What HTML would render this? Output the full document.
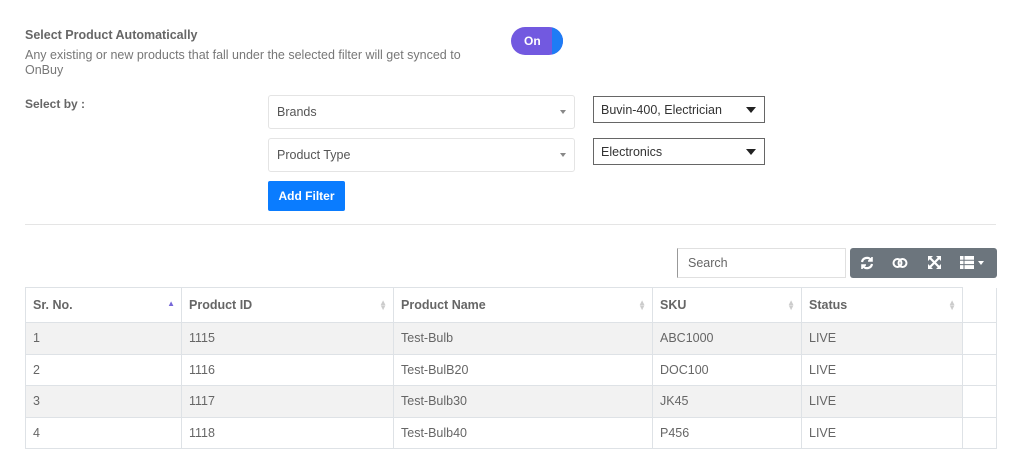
<!DOCTYPE html>
<html><head><style>
*{box-sizing:border-box;margin:0;padding:0}
body{width:1024px;height:447px;background:#fff;font-family:"Liberation Sans",sans-serif;color:#6c757d;position:relative;overflow:hidden;font-size:12px}
.a{position:absolute}
.sel{position:absolute;border:1px solid #e4e4e4;border-radius:3px;background:#fff;padding-left:8px;display:flex;align-items:center;font-size:12.5px;color:#555}
.sel .c{position:absolute;right:8px;top:50%;margin-top:-2px;border-left:3px solid transparent;border-right:3px solid transparent;border-top:4px solid #888}
.bs{position:absolute;border:1px solid #666;background:#fff;padding-left:7px;display:flex;align-items:center;font-size:12.5px;color:#333}
.bs .c{position:absolute;right:8px;top:50%;margin-top:-3px;border-left:5px solid transparent;border-right:5px solid transparent;border-top:6px solid #222}
table{position:absolute;left:25px;top:287px;border-collapse:collapse;font-size:12.5px}
td,th{border:1px solid #dee2e6;text-align:left;padding:0 7px;position:relative}
th{height:35px;font-weight:bold;color:#666}
td{height:31.5px;color:#666}
tr.g td{background:#f2f2f2}
.s{position:absolute;right:6px;top:12px;color:#ccc;font-size:8px;line-height:5px}
</style></head><body>
<div class="a" style="left:25px;top:28px;font-weight:bold;font-size:12.5px;color:#666">Select Product Automatically</div>
<div class="a" style="left:25px;top:48px;font-size:12.5px;line-height:15px;color:#777;width:455px">Any existing or new products that fall under the selected filter will get synced to OnBuy</div>
<div class="a" style="left:511px;top:27px;width:52px;height:28px;border-radius:14px;background:#7259e0;overflow:hidden"><div class="a" style="right:0;top:0;width:11px;height:28px;background:#1e7cf5"></div><div class="a" style="left:13px;top:7px;color:#fff;font-weight:bold;font-size:12px">On</div></div>
<div class="a" style="left:25px;top:97px;font-weight:bold;color:#666">Select by :</div>
<div class="sel" style="left:268px;top:95px;width:307px;height:34px">Brands<span class="c"></span></div>
<div class="sel" style="left:268px;top:138px;width:307px;height:34px">Product Type<span class="c"></span></div>
<div class="bs" style="left:593px;top:96px;width:172px;height:27px">Buvin-400, Electrician<span class="c"></span></div>
<div class="bs" style="left:593px;top:138px;width:172px;height:27px">Electronics<span class="c"></span></div>
<div class="a" style="left:268px;top:181px;width:77px;height:30px;background:#0a7cff;border-radius:2px;color:#fff;font-weight:bold;font-size:12px;text-align:center;line-height:30px">Add Filter</div>
<div class="a" style="left:25px;top:224px;width:971px;height:1px;background:#e5e5e5"></div>
<div class="a" style="left:677px;top:248px;width:169px;height:30px;border:1px solid #e0e0e0;border-left:1px solid #999;padding-left:10px;line-height:28px;font-size:12.5px;color:#666">Search</div>
<div class="a" style="left:850px;top:248px;width:147px;height:30px;background:#6c757d;border-radius:3px;color:#fff">
<svg class="a" style="left:10px;top:8px" width="14" height="14" viewBox="0 0 14 14" fill="none" stroke="#fff" stroke-width="2.2"><path d="M2 6a5 5 0 0 1 9-2M12 8a5 5 0 0 1-9 2"/><path d="M12 1v4H8M2 13V9h4" stroke-width="1.6" fill="#fff"/></svg>
<svg class="a" style="left:42px;top:9px" width="16" height="12" viewBox="0 0 16 12" fill="none" stroke="#fff" stroke-width="2"><circle cx="5.5" cy="6" r="4"/><circle cx="10.5" cy="6" r="4"/></svg>
<svg class="a" style="left:78px;top:8px" width="13" height="13" viewBox="0 0 13 13" fill="#fff"><path d="M0 0h5L0 5zM13 0v5L8 0zM0 13V8l5 5zM13 13H8l5-5z"/><path d="M2 2l9 9M11 2l-9 9" stroke="#fff" stroke-width="2.2"/></svg>
<svg class="a" style="left:110px;top:8px" width="14" height="13" viewBox="0 0 14 13" fill="#fff"><rect x="0" y="0" width="14" height="13"/><path d="M4 0v13M0 4.3h14M0 8.6h14" stroke="#6c757d" stroke-width="1"/></svg>
<div class="a" style="left:128px;top:13px;border-left:3px solid transparent;border-right:3px solid transparent;border-top:4px solid #fff"></div>
</div>
<table>
<tr><th style="width:156px">Sr. No.<span class="s" style="color:#7667d8;top:13px">▲</span></th><th style="width:212px">Product ID<span class="s">▲<br>▼</span></th><th style="width:259px">Product Name<span class="s">▲<br>▼</span></th><th style="width:149px">SKU<span class="s">▲<br>▼</span></th><th style="width:161px">Status<span class="s">▲<br>▼</span></th><th style="width:34px;border-left:none;border-top:none"></th></tr>
<tr class="g"><td>1</td><td>1115</td><td>Test-Bulb</td><td>ABC1000</td><td>LIVE</td><td style="background:#fff"></td></tr>
<tr><td>2</td><td>1116</td><td>Test-BulB20</td><td>DOC100</td><td>LIVE</td><td></td></tr>
<tr class="g"><td>3</td><td>1117</td><td>Test-Bulb30</td><td>JK45</td><td>LIVE</td><td style="background:#fff"></td></tr>
<tr><td>4</td><td>1118</td><td>Test-Bulb40</td><td>P456</td><td>LIVE</td><td></td></tr>
</table>
</body></html>
